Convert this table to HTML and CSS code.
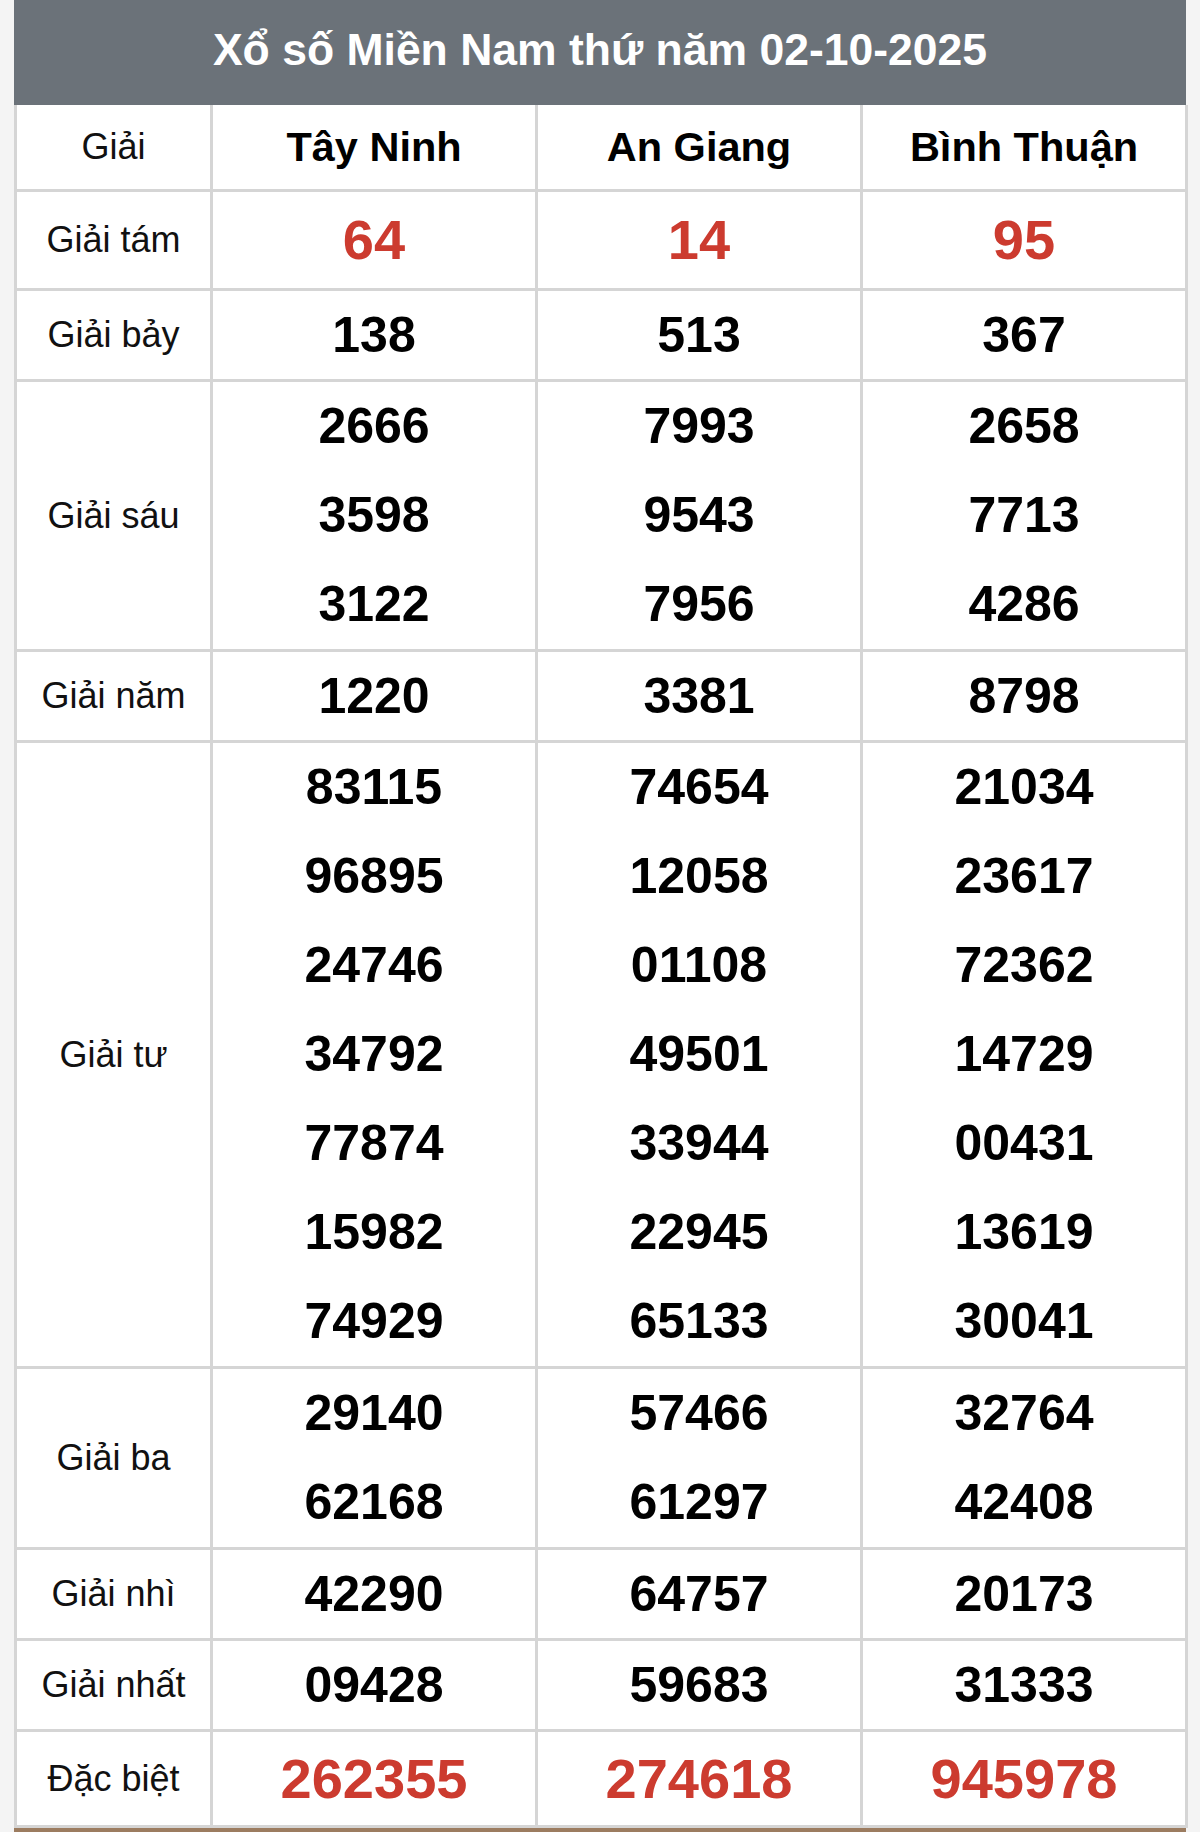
FILE: index.html
```html
<!DOCTYPE html>
<html lang="vi">
<head>
<meta charset="utf-8">
<title>Xổ số Miền Nam thứ năm 02-10-2025</title>
<link rel="stylesheet" href="styles.css">
</head>
<body>
<div class="page">
  <div class="title">Xổ số Miền Nam thứ năm 02-10-2025</div>
  <table class="kq">
    <colgroup>
      <col class="c-label">
      <col class="c-prov">
      <col class="c-prov">
      <col class="c-prov">
    </colgroup>
    <thead>
      <tr class="head">
        <th class="label">Giải</th>
        <th>Tây Ninh</th>
        <th>An Giang</th>
        <th>Bình Thuận</th>
      </tr>
    </thead>
    <tbody>
      <tr class="big">
        <td class="label">Giải tám</td>
        <td><div class="n red">64</div></td>
        <td><div class="n red">14</div></td>
        <td><div class="n red">95</div></td>
      </tr>
      <tr class="one">
        <td class="label">Giải bảy</td>
        <td><div class="n">138</div></td>
        <td><div class="n">513</div></td>
        <td><div class="n">367</div></td>
      </tr>
      <tr>
        <td class="label">Giải sáu</td>
        <td><div class="n">2666</div><div class="n">3598</div><div class="n">3122</div></td>
        <td><div class="n">7993</div><div class="n">9543</div><div class="n">7956</div></td>
        <td><div class="n">2658</div><div class="n">7713</div><div class="n">4286</div></td>
      </tr>
      <tr class="one">
        <td class="label">Giải năm</td>
        <td><div class="n">1220</div></td>
        <td><div class="n">3381</div></td>
        <td><div class="n">8798</div></td>
      </tr>
      <tr>
        <td class="label">Giải tư</td>
        <td><div class="n">83115</div><div class="n">96895</div><div class="n">24746</div><div class="n">34792</div><div class="n">77874</div><div class="n">15982</div><div class="n">74929</div></td>
        <td><div class="n">74654</div><div class="n">12058</div><div class="n">01108</div><div class="n">49501</div><div class="n">33944</div><div class="n">22945</div><div class="n">65133</div></td>
        <td><div class="n">21034</div><div class="n">23617</div><div class="n">72362</div><div class="n">14729</div><div class="n">00431</div><div class="n">13619</div><div class="n">30041</div></td>
      </tr>
      <tr>
        <td class="label">Giải ba</td>
        <td><div class="n">29140</div><div class="n">62168</div></td>
        <td><div class="n">57466</div><div class="n">61297</div></td>
        <td><div class="n">32764</div><div class="n">42408</div></td>
      </tr>
      <tr class="one">
        <td class="label">Giải nhì</td>
        <td><div class="n">42290</div></td>
        <td><div class="n">64757</div></td>
        <td><div class="n">20173</div></td>
      </tr>
      <tr class="one">
        <td class="label">Giải nhất</td>
        <td><div class="n">09428</div></td>
        <td><div class="n">59683</div></td>
        <td><div class="n">31333</div></td>
      </tr>
      <tr class="big last">
        <td class="label">Đặc biệt</td>
        <td><div class="n red">262355</div></td>
        <td><div class="n red">274618</div></td>
        <td><div class="n red">945978</div></td>
      </tr>
    </tbody>
  </table>
  <div class="strip"></div>
</div>
</body>
</html>
```

FILE: styles.css
```css
html, body {
  margin: 0;
  padding: 0;
  background: #f4f4f4;
}

.page {
  width: 1172px;
  margin: 0 14px;
  font-family: "Liberation Sans", Arial, sans-serif;
  color: #000;
}

.title {
  height: 105px;
  background: #6b7279;
  color: #fff;
  font-weight: bold;
  font-size: 44.5px;
  line-height: 100px;
  text-align: center;
}

.kq {
  width: 1172px;
  border-collapse: collapse;
  table-layout: fixed;
  background: #fff;
}

.c-label { width: 196px; }
.c-prov { width: 325px; }

.kq th,
.kq td {
  border: 3px solid #d5d5d5;
  padding: 0;
  text-align: center;
  vertical-align: middle;
}

.kq tr:first-child th { border-top: 0; }

.head th {
  height: 84px;
  font-size: 41.5px;
  font-weight: bold;
}

.head th.label,
.kq td.label {
  font-size: 36px;
  font-weight: normal;
  color: #111;
}

.n {
  height: 89px;
  line-height: 89px;
  font-size: 50px;
  font-weight: bold;
}

.one .n {
  height: 88px;
  line-height: 88px;
}

.big .n {
  height: 96px;
  line-height: 96px;
  font-size: 56px;
}

.last .n {
  height: 93px;
  line-height: 93px;
}

.red { color: #cc3b2f; }

.strip {
  height: 4px;
  background: #9c7c60;
}
```
